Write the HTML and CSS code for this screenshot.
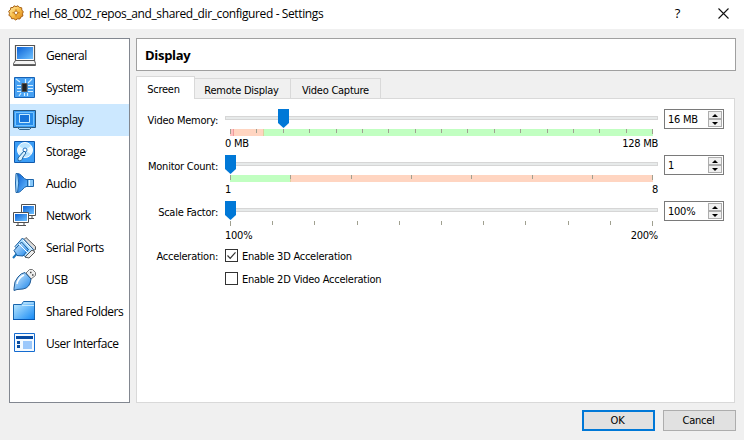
FILE: index.html
```html
<!DOCTYPE html>
<html lang="en">
<head>
<meta charset="utf-8">
<title>rhel_68_002_repos_and_shared_dir_configured - Settings</title>
<link rel="stylesheet" href="styles.css">
</head>
<body>
<svg class="defs" width="0" height="0" aria-hidden="true">
  <defs>
    <linearGradient id="blue" x1="0" y1="0" x2="1" y2="1"><stop offset="0" stop-color="#0b62d6"/><stop offset="1" stop-color="#6ec1ff"/></linearGradient>
    <linearGradient id="light" x1="0" y1="0" x2="1" y2="1"><stop offset="0" stop-color="#dff3ff"/><stop offset="1" stop-color="#1682ea"/></linearGradient>
    <linearGradient id="folder" x1="0" y1="0" x2="1" y2="1"><stop offset="0" stop-color="#c8efff"/><stop offset="1" stop-color="#1488f4"/></linearGradient>
    <linearGradient id="gold" x1="0" y1="0" x2="1" y2="1"><stop offset="0" stop-color="#fff0b0"/><stop offset=".5" stop-color="#f8bd48"/><stop offset="1" stop-color="#d67d10"/></linearGradient>
  </defs>
</svg>
<header class="titlebar">
  <svg class="gear" width="16" height="16" viewBox="0 0 16 16"><path d="M6 .8 8 1.6 10 .8l1.4 1.6 2.3.4.1 2.2 1.5 1.8-.8 2 .4 2.2-2 1-1 2-2.3-.2-1.9 1.2-1.8-1.3-2.3 0-.7-2.1-2-1.2.6-2.1-.8-2.1 1.7-1.4.4-2.2 2.3-.1z" fill="url(#gold)" stroke="#a86013" stroke-width="1"/><path d="M8 4.2v2M8 9.5v2M4.400 7.8h2M9.6 7.8h2" stroke="#c67518"/><circle cx="8" cy="7.8" r="1.7" fill="#fff" stroke="#a86013" stroke-width=".8"/></svg>
  <h1>rhel_68_002_repos_and_shared_dir_configured - Settings</h1>
  <span class="help">?</span>
  <svg class="close" width="11" height="11" viewBox="0 0 11 11"><path d="M.5.5l10 10M10.500.5l-10 10" stroke="#111" stroke-width="1.1"/></svg>
</header>
<div class="body">
  <nav class="sidebar">
    <a class="item"><svg width="24" height="24" viewBox="0 0 24 24"><path d="M3.500 1.500h19v15h-19z" fill="#fff" stroke="#555" stroke-width="1.2"/><path d="M5 3h16v12H5z" fill="url(#blue)"/><path d="M3.500 16.500h19l1 3v2H1.500v-2z" fill="#f4f4f4" stroke="#555"/><path d="M1 20.500h23" stroke="#666"/></svg><span>General</span></a>
    <a class="item"><svg width="24" height="24" viewBox="0 0 24 24"><path d="M2.500 1.500h20v20h-20z" fill="#47a1f3" stroke="#1762b5"/><g stroke="#d5efff" stroke-width="1.2"><path d="M5 9.500h4M5 12.500h4M5 15.500h4M16 9.500h5M16 12.500h5M16 15.500h5M13.500 3v4M16 7l4-4M12.500 17v3M15.500 17v3M9 17l-2 3M4 3l4 3"/></g><path d="M10 7.500h5v8h-5z" fill="#222" stroke="#555"/></svg><span>System</span></a>
    <a class="item selected"><svg width="24" height="24" viewBox="0 0 24 24"><path d="M1.500 2.500h22v17h-22z" fill="#3b9df3" stroke="#25567f"/><path d="M3.500 4.500h18v13h-18z" fill="#268bea" stroke="#75c4ff"/><path d="M7.500 6.500h10v8h-10z" fill="#1674da" stroke="#c6ebff"/><path d="M5.500 19.500h14l-2 2h-10z" fill="#a8d9fa" stroke="#31648c"/></svg><span>Display</span></a>
    <a class="item"><svg width="24" height="24" viewBox="0 0 24 24"><path d="M2.500 1.500h20v21h-20z" fill="#3c9ef6" stroke="#1059ac"/><circle cx="13" cy="10" r="7.500" fill="#b9e4ff" stroke="#fff"/><path d="M13 10l6-4a7 7 0 0 1 0 8zM13 10l-6 4a7 7 0 0 1 0-8z" fill="#edfaff"/><circle cx="13" cy="10" r="2" fill="#fff" stroke="#2b79c8"/><path d="M12 11 6 18q-1 3 2 3 3-1 3-4l3-4z" fill="#d8f1ff" stroke="#21649f"/></svg><span>Storage</span></a>
    <a class="item"><svg width="24" height="24" viewBox="0 0 24 24"><path d="M13.500 7.500h8v7h-8z" fill="#87c8fa" stroke="#1d64a9"/><path d="M5.500 1.500q2 0 4 2 3 4 6 4.500v6q-3 .5-6 4.500-2 2-4 2z" fill="url(#blue)" stroke="#1d64a9"/><path d="M4 1.500h1.500q2.500 9.500 0 19H4q-1-9.500 0-19z" fill="#a6daff" stroke="#1d64a9"/><path d="M17.500 8v6" stroke="#e8f8ff"/></svg><span>Audio</span></a>
    <a class="item"><svg width="24" height="24" viewBox="0 0 24 24"><path d="M9.500 .5h14v11h-14z" fill="#fff" stroke="#505050"/><path d="M11 2h11v8H11z" fill="url(#blue)"/><path d="M20 12v2M16 14.500h6" stroke="#505050"/><path d="M1.500 8.500h15v10h-15z" fill="#fff" stroke="#505050"/><path d="M3 10h12v7H3z" fill="url(#blue)"/><path d="M6 19v2M12 19v2M4 21.500h10" stroke="#505050"/></svg><span>Network</span></a>
    <a class="item"><svg width="24" height="24" viewBox="0 0 24 24"><path d="M12 3.500 14 1.500l9.500 9v3l-2 1z" fill="#ddd" stroke="#555"/><path d="M3 10.500 10.500 2l11 11.500-7 8.500z" fill="#a8dcff" stroke="#17599a"/><path d="M2 14.500 9.500 6l7 7.500-5.500 6.500-6-.5z" fill="url(#light)" stroke="#17599a"/><path d="m11 4 9 9.500M7 8l9 9" stroke="#fff"/><path d="m13 21 7-7 3 2-6 6z" fill="#eee" stroke="#555"/><path d="M4.500 18 1 22" stroke="#1974bc" stroke-width="2"/></svg><span>Serial Ports</span></a>
    <a class="item"><svg width="24" height="24" viewBox="0 0 24 24"><path d="m14 5 3.500-3.500h3l3 3v3L19 11z" fill="#eee" stroke="#777"/><path d="M18 4.500h1.500M20 7h1.500" stroke="#444" stroke-width="1.4"/><path d="m13 4.500 6 6.500q-1 9-8 10l-6 .5-3 1v-2Q2 13 6 9q3-4 7-4.500z" fill="url(#light)" stroke="#225b94"/><path d="M5 16q1-6 7-9" stroke="#fff" fill="none" stroke-width="1.5"/></svg><span>USB</span></a>
    <a class="item"><svg width="24" height="24" viewBox="0 0 24 24"><path d="M1.500 4.500h8l2-3h11v18h-21z" fill="url(#folder)" stroke="#1765ad"/><path d="M10 5.500h12M11.500 3h10" stroke="#c5e9ff"/><path d="M1 19.500h22" stroke="#0858b4"/></svg><span>Shared Folders</span></a>
    <a class="item"><svg width="24" height="24" viewBox="0 0 24 24"><path d="M2.500 1.500h20v18h-20z" fill="#f4faff" stroke="#146bd0"/><path d="M4 4h17v3H4z" fill="#064aa2"/><path d="M5 9h3v3H5zM5 13h3v3H5z" fill="#0b4d9f"/><path d="M11 9h9v8h-9z" fill="#9bc8fb"/></svg><span>User Interface</span></a>
  </nav>
  <main>
    <h2>Display</h2>
    <div class="tabs"><span class="tab active">Screen</span><span class="tab remote">Remote Display</span><span class="tab video">Video Capture</span></div>
    <section class="pane">
      <div class="row">
        <label>Video Memory:</label>
        <div class="slider memory">
          <div class="track"><svg class="thumb" width="11" height="19" viewBox="0 0 11 19"><path d="M0 0h11v14l-5.500 5L0 14z"/></svg></div>
          <svg class="scale" width="433" height="8" viewBox="0 0 433 8" shape-rendering="crispEdges"><path d="M5 0h4v7H5z" fill="#ffc1c1"/><path d="M9 0h30v7H9z" fill="#ffd5c1"/><path d="M39 0h389v7H39z" fill="#c1ffc1"/><path d="M8 0h1v7H8z" fill="#ef9c9c"/><path d="M38 0h1v7h-1z" fill="#dfcfa0"/><path class="ticks" d="M5.500 0v5M31.500 0v4M58.500 0v4M84.500 0v4M111.500 0v4M137.500 0v4M163.500 0v4M190.500 0v4M216.500 0v4M242.500 0v4M269.500 0v4M295.500 0v4M322.500 0v4M348.500 0v4M374.500 0v4M401.500 0v4M427.500 0v5"/></svg>
          <div class="limits"><span>0 MB</span><span>128 MB</span></div>
        </div>
        <div class="spin"><span>16 MB</span><i class="steps"><b class="up"></b><b class="down"></b></i></div>
      </div>
      <div class="row">
        <label>Monitor Count:</label>
        <div class="slider">
          <div class="track"><svg class="thumb" width="11" height="19" viewBox="0 0 11 19"><path d="M0 0h11v14l-5.500 5L0 14z"/></svg></div>
          <svg class="scale" width="433" height="8" viewBox="0 0 433 8" shape-rendering="crispEdges"><path d="M5 0h60v7H5z" fill="#c1ffc1"/><path d="M65 0h363v7H65z" fill="#ffd5c1"/><path d="M65 0h1v7h-1z" fill="#dfcfa0"/><path class="ticks" d="M5.500 0v5M65.500 0v4M126.500 0v4M186.500 0v4M246.500 0v4M307.500 0v4M367.500 0v4M427.500 0v5"/></svg>
          <div class="limits"><span>1</span><span>8</span></div>
        </div>
        <div class="spin"><span>1</span><i class="steps"><b class="up"></b><b class="down"></b></i></div>
      </div>
      <div class="row">
        <label>Scale Factor:</label>
        <div class="slider">
          <div class="track"><svg class="thumb" width="11" height="19" viewBox="0 0 11 19"><path d="M0 0h11v14l-5.500 5L0 14z"/></svg></div>
          <svg class="scale" width="433" height="8" viewBox="0 0 433 8" shape-rendering="crispEdges"><path class="ticks" d="M5.500 0v5M47.500 0v4M89.500 0v4M132.500 0v4M174.500 0v4M216.500 0v4M258.500 0v4M300.500 0v4M343.500 0v4M385.500 0v4M427.500 0v5"/></svg>
          <div class="limits"><span>100%</span><span>200%</span></div>
        </div>
        <div class="spin"><span>100%</span><i class="steps"><b class="up"></b><b class="down"></b></i></div>
      </div>
      <div class="row checks">
        <label>Acceleration:</label>
        <div class="options">
          <div class="option"><span class="box"><svg width="11" height="11" viewBox="0 0 11 11"><path d="m1.500 5.500 2.700 2.800 5.300-6" fill="none" stroke="#333" stroke-width="1.2"/></svg></span><span>Enable 3D Acceleration</span></div>
          <div class="option"><span class="box"></span><span>Enable 2D Video Acceleration</span></div>
        </div>
      </div>
    </section>
    <footer><button class="ok">OK</button><button>Cancel</button></footer>
  </main>
</div>
</body>
</html>
```

FILE: styles.css
```css
* { box-sizing: border-box; }
body { margin: 0; width: 744px; height: 440px; overflow: hidden; background: #f0f0f0; color: #000; font: 11px/14px "DejaVu Sans Condensed", "DejaVu Sans", sans-serif; font-stretch: condensed; letter-spacing: -0.25px; }
svg { display: block; flex: none; }
.defs { position: absolute; }
.titlebar { height: 29px; background: #fff; display: flex; align-items: center; padding: 0 15px 3px 8px; font-family: "Open Sans", sans-serif; font-stretch: normal; }
h1 { margin: 0 auto 0 5px; padding-top: 2px; font-size: 12px; font-weight: 400; line-height: 16px; letter-spacing: -0.39px; white-space: nowrap; }
.help { font-size: 13px; margin-right: 38px; }
.body { display: flex; padding: 9px 8px 0 9px; gap: 6px; }
.sidebar { width: 121px; height: 365px; border: 1px solid #828790; background: #fff; padding-top: 1px; }
.item { height: 32px; display: flex; align-items: center; gap: 10px; padding-left: 2px; font: 12px/16px "Open Sans", sans-serif; letter-spacing: -0.47px; white-space: nowrap; }
.selected { background: #cce8ff; }
main { width: 600px; }
h2 { margin: 0; height: 33px; border: 1px solid #a0a0a0; background: #fff; padding: 0 8px; font: 700 13px/33px "Open Sans", sans-serif; letter-spacing: -0.3px; }
.tabs { display: flex; align-items: flex-end; height: 27px; }
.tab { height: 20px; border: 1px solid #d9d9d9; border-left: 0; text-align: center; line-height: 21px; padding-top: 1px; }
.active { height: 22px; width: 59px; border-left: 1px solid #d9d9d9; background: #fff; border-bottom: 0; line-height: 23px; padding-right: 4px; }
.remote { width: 96px; border-bottom: 0; padding-right: 2px; }
.video { width: 90px; border-bottom: 0; }
.pane { width: 599px; height: 305px; border: 1px solid #d9d9d9; background: #fff; padding: 10px 10px 0 0; position: relative; }
.pane::before { content: ""; position: absolute; top: -1px; left: 0; width: 57px; height: 1px; background: #fff; }
.row { display: grid; grid-template-columns: 81px 433px 60px; column-gap: 7px; height: 46px; align-items: start; }
.row label { text-align: right; line-height: 23px; white-space: nowrap; }
.row > .spin { margin-left: -1px; }
.slider { display: flex; flex-direction: column; padding-top: 7px; }
.track { height: 4px; border: 1px solid #d6d6d6; background: #e7eaea; position: relative; }
.thumb { position: absolute; left: -1px; top: -8px; fill: #0078d7; }
.memory .thumb { left: 52px; }
.scale { margin-top: 9px; }
.ticks { stroke: #a0a090; fill: none; }
.limits { display: flex; justify-content: space-between; line-height: 12px; padding-top: 1px; }
.spin { width: 60px; height: 20px; border: 1px solid #7a7a7a; background: #fff; display: flex; justify-content: space-between; align-items: center; padding: 0 1px 0 3px; }
.spin > span { padding-top: 2px; }
.steps { display: grid; gap: 0; }
.steps b { width: 14px; height: 8px; border: 1px solid #adadad; background: #f0f0f0; display: grid; place-items: center; }
.steps b::after { content: ""; border: 3px solid transparent; border-top: 0; border-bottom: 3px solid #000; }
.steps .down::after { transform: rotate(180deg); }
.checks { padding-top: 2px; }
.options { display: grid; gap: 10px; padding-top: 0; }
.option { display: flex; align-items: center; gap: 4px; height: 13px; white-space: nowrap; }
.option > span:last-child { padding-top: 2px; }
.checks label { line-height: 15px; }
.box { width: 13px; height: 13px; border: 1px solid #333; flex: none; }
footer { display: flex; gap: 8px; justify-content: flex-end; padding-top: 7px; }
button { width: 73px; height: 21px; padding: 1px 2px 0 0; border: 1px solid #adadad; background: #e1e1e1; color: #000; font: inherit; letter-spacing: inherit; }
.ok { border: 2px solid #0078d7; }
```
